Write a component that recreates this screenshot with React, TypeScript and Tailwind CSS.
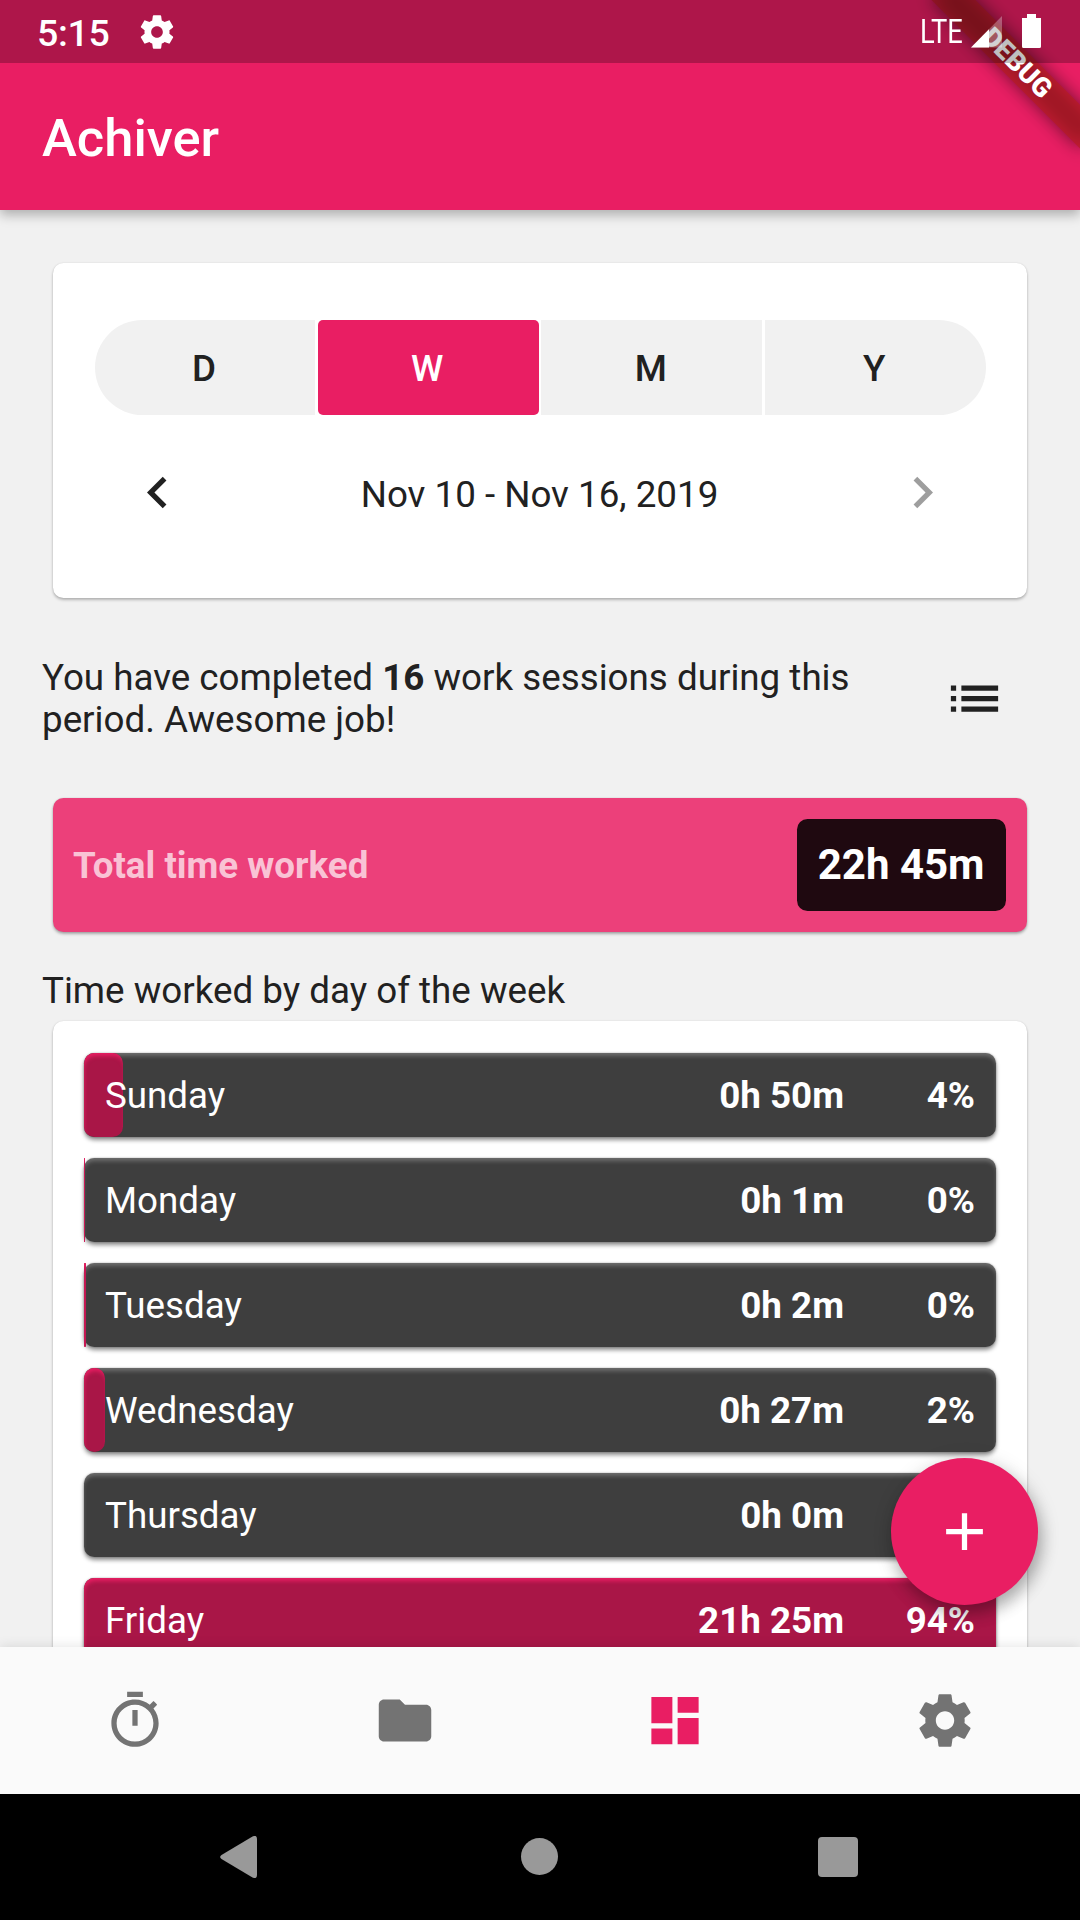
import React from "react";

const ICONS = {
  settings:
    "M19.43 12.98c.04-.32.07-.64.07-.98s-.03-.66-.07-.98l2.11-1.65c.19-.15.24-.42.12-.64l-2-3.46c-.12-.22-.39-.3-.61-.22l-2.49 1c-.52-.4-1.08-.73-1.69-.98l-.38-2.65C14.46 2.18 14.25 2 14 2h-4c-.25 0-.46.18-.49.42l-.38 2.65c-.61.25-1.17.59-1.69.98l-2.49-1c-.23-.09-.49 0-.61.22l-2 3.46c-.13.22-.07.49.12.64l2.11 1.65c-.04.32-.07.65-.07.98s.03.66.07.98l-2.11 1.65c-.19.15-.24.42-.12.64l2 3.46c.12.22.39.3.61.22l2.49-1c.52.4 1.08.73 1.69.98l.38 2.65c.03.24.24.42.49.42h4c.25 0 .46-.18.49-.42l.38-2.65c.61-.25 1.17-.59 1.69-.98l2.49 1c.23.09.49 0 .61-.22l2-3.46c.12-.22.07-.49-.12-.64l-2.11-1.65zM12 15.5c-1.93 0-3.5-1.57-3.5-3.5s1.57-3.5 3.5-3.5 3.5 1.57 3.5 3.5-1.57 3.5-3.5 3.5z",
  timer:
    "M15 1H9v2h6V1zm-4 13h2V8h-2v6zm8.03-6.61l1.42-1.42c-.43-.51-.9-.99-1.41-1.41l-1.42 1.42C16.07 4.74 14.12 4 12 4c-4.97 0-9 4.03-9 9s4.02 9 9 9 9-4.03 9-9c0-2.12-.74-4.07-1.97-5.61zM12 20c-3.87 0-7-3.13-7-7s3.13-7 7-7 7 3.13 7 7-3.13 7-7 7z",
  folder:
    "M10 4H4c-1.1 0-1.99.9-1.99 2L2 18c0 1.1.9 2 2 2h16c1.1 0 2-.9 2-2V8c0-1.1-.9-2-2-2h-8l-2-2z",
  dashboard: "M3 13h8V3H3v10zm0 8h8v-6H3v6zm10 0h8V11h-8v10zm0-18v6h8V3h-8z",
  list: "M3 13h2v-2H3v2zm0 4h2v-2H3v2zm0-8h2V7H3v2zm4 4h14v-2H7v2zm0 4h14v-2H7v2zM7 7v2h14V7H7z",
  left: "M15.41 7.41L14 6l-6 6 6 6 1.41-1.41L10.83 12z",
  right: "M10 6L8.59 7.41 13.17 12l-4.58 4.59L10 18l6-6z",
  add: "M19 13h-6v6h-2v-6H5v-2h6V5h2v6h6v2z",
};

function Icon({ name, className = "" }: { name: keyof typeof ICONS; className?: string }) {
  return (
    <svg viewBox="0 0 24 24" fill="currentColor" className={`block shrink-0 ${className}`}>
      <path d={ICONS[name]} />
    </svg>
  );
}

const PERIODS = [
  { label: "D", style: "rounded-l-full bg-[#f1f1f1]" },
  { label: "W", style: "rounded-[5px] bg-[#e91e63] text-white" },
  { label: "M", style: "bg-[#f1f1f1]" },
  { label: "Y", style: "rounded-r-full bg-[#f1f1f1]" },
];

const DAYS = [
  { day: "Sunday", time: "0h 50m", percent: "4%", fill: 39 },
  { day: "Monday", time: "0h 1m", percent: "0%", fill: 0.9 },
  { day: "Tuesday", time: "0h 2m", percent: "0%", fill: 1.7 },
  { day: "Wednesday", time: "0h 27m", percent: "2%", fill: 21.4 },
  { day: "Thursday", time: "0h 0m", percent: "0%", fill: 0 },
  { day: "Friday", time: "21h 25m", percent: "94%", fill: 912 },
];

function StatusBar() {
  return (
    <div className="absolute inset-x-0 top-0 flex h-[63px] items-center bg-black/25 pl-[37px] pr-[39px] text-white">
      <span className="w-[104px] pt-[3px] text-[37.5px] font-medium leading-[63px] tracking-[-0.3px]">5:15</span>
      <Icon name="settings" className="-ml-[4px] size-[40px]" />
      <div className="ml-auto flex h-full items-center">
        <span className="mr-[5px] w-[46px] origin-left scale-x-[0.84] text-[32.5px] leading-[62px]">LTE</span>
        <svg width="31" height="32" viewBox="0 0 31 32" className="mr-[20px]">
          <path d="M0 31.5L31 0V31.5Z" fill="#fff" fillOpacity="0.3" />
          <path d="M0 31.5L18 13.2V31.5Z" fill="#fff" />
        </svg>
        <svg width="19" height="34" viewBox="0 0 19 34" className="-mt-px">
          <path d="M5 0h9v4h5v28.500q0 1.500-1.500 1.500h-16Q0 34 0 32.500V4h5Z" fill="#fff" />
        </svg>
      </div>
    </div>
  );
}

function DebugBanner() {
  return (
    <div className="absolute left-full top-0 size-0 rotate-45">
      <div className="absolute -left-[105px] top-[73.5px] h-[31.5px] w-[210px] bg-black/50 blur-[9px]" />
      <div className="absolute -left-[105px] top-[73.5px] flex h-[31.5px] w-[210px] items-center justify-center bg-[#b71c1c]/63 text-[27px] font-black leading-none text-white">
        DEBUG
      </div>
    </div>
  );
}

function DayRow({ day, time, percent, fill }: (typeof DAYS)[number]) {
  return (
    <div className="relative flex h-[84px] shrink-0 items-center rounded-[10.5px] bg-[#3e3e3e] px-[21px] pt-[2px] text-white shadow-[0_3px_4px_rgba(0,0,0,0.45),0_0_2px_rgba(0,0,0,0.3),inset_0_4px_4px_-1px_rgba(255,255,255,0.25)]">
      {fill > 0 && (
        <div
          className="absolute inset-y-0 left-0 rounded-[10.5px] bg-[#a91647] shadow-[inset_1px_4px_4px_-1px_#e91e63]"
          style={{ width: fill }}
        />
      )}
      <span className="relative flex-1">{day}</span>
      <span className="relative font-bold">{time}</span>
      <span className="relative w-[131px] text-right font-bold">{percent}</span>
    </div>
  );
}

export default function App() {
  return (
    <div className="flex h-[1920px] w-[1080px] flex-col overflow-hidden bg-[#f1f1f1] font-['Roboto',sans-serif] text-[36.75px] leading-[42px] text-[#212121]">
      <header className="relative z-10 h-[210px] shrink-0 bg-[#e91e63] pt-[63px] shadow-[0_5px_11px_rgba(0,0,0,0.28)]">
        <h1 className="pl-[42px] pt-px text-[52.5px] font-medium leading-[149px] text-white">Achiver</h1>
        <DebugBanner />
        <StatusBar />
      </header>

      <main className="flex min-h-0 flex-1 flex-col overflow-hidden pl-[52.5px] pr-[53px] pt-[52.5px]">
        <section className="h-[335.5px] shrink-0 rounded-[10.5px] bg-white pl-[42px] pr-[41.5px] pt-[57.5px] shadow-[0_2px_3px_rgba(0,0,0,0.25),0_0_2px_rgba(0,0,0,0.1)]">
          <div className="grid h-[94.5px] grid-cols-4 gap-[2.625px]">
            {PERIODS.map((p) => (
              <button key={p.label} className={`pr-[2px] pt-[3px] font-medium ${p.style}`}>
                {p.label}
              </button>
            ))}
          </div>
          <div className="mt-[46px] flex items-center justify-between px-[31.5px]">
            <Icon name="left" className="size-[63px]" />
            <span className="pr-[1px] pt-[5px]">Nov 10 - Nov 16, 2019</span>
            <Icon name="right" className="size-[63px] text-[#9e9e9e]" />
          </div>
        </section>

        <section className="-ml-[10.5px] mt-[58.5px] flex h-[84px] shrink-0 items-center justify-between pr-[21px]">
          <p className="w-[840px]">
            You have completed <b className="font-bold">16</b> work sessions during this period. Awesome job!
          </p>
          <Icon name="list" className="size-[63px]" />
        </section>

        <section className="mt-[57.5px] flex h-[134px] shrink-0 items-center justify-between rounded-[10.5px] bg-[#ec407a] px-[21px] shadow-[0_2px_3px_rgba(0,0,0,0.3),0_0_2px_rgba(0,0,0,0.12)]">
          <span className="-ml-[0.5px] pt-[2px] font-bold text-white/70">Total time worked</span>
          <span className="rounded-[10.5px] bg-[#1f0910] pl-[21px] pr-[21.5px] text-[42px] font-bold leading-[92px] text-white">
            22h 45m
          </span>
        </section>

        <h2 className="-ml-[10.5px] mt-[37.5px] shrink-0">Time worked by day of the week</h2>

        <section className="mt-[9.5px] flex shrink-0 flex-col gap-[21px] rounded-[10.5px] bg-white py-[31.5px] pl-[31.5px] pr-[31px] shadow-[0_2px_3px_rgba(0,0,0,0.25),0_0_2px_rgba(0,0,0,0.1)]">
          {DAYS.map((d) => (
            <DayRow key={d.day} {...d} />
          ))}
        </section>
      </main>

      <nav className="relative flex h-[147px] shrink-0 items-center justify-around bg-[#fafafa] text-[#737373] shadow-[0_0_12px_rgba(0,0,0,0.12)]">
        <Icon name="timer" className="size-[63px] -translate-x-[0.5px]" />
        <Icon name="folder" className="size-[63px] -translate-x-[0.5px]" />
        <Icon name="dashboard" className="size-[63px] -translate-x-[0.5px] text-[#e91e63]" />
        <Icon name="settings" className="size-[63px] -translate-x-[0.5px]" />
        <button className="absolute -top-[189px] right-[42px] flex size-[147px] items-center justify-center rounded-full bg-[#e91e63] text-white shadow-[3px_9px_15px_rgba(0,0,0,0.25),2px_4px_22px_rgba(0,0,0,0.14)]">
          <Icon name="add" className="size-[63px]" />
        </button>
      </nav>

      <footer className="flex h-[126px] shrink-0 items-center bg-black pb-px pl-[220px] text-[#999999]">
        <svg width="37" height="42" viewBox="0 0 37 42" fill="currentColor">
          <path d="M32.500 0.500Q37-1.500 37 3V39Q37 43.500 32.500 41.500L1.500 23Q-1.200 21 1.500 19Z" />
        </svg>
        <span className="ml-[264px] size-[37px] rounded-full bg-[#999999]" />
        <span className="ml-[260px] size-[40px] rounded-[4px] bg-[#999999]" />
      </footer>
    </div>
  );
}
